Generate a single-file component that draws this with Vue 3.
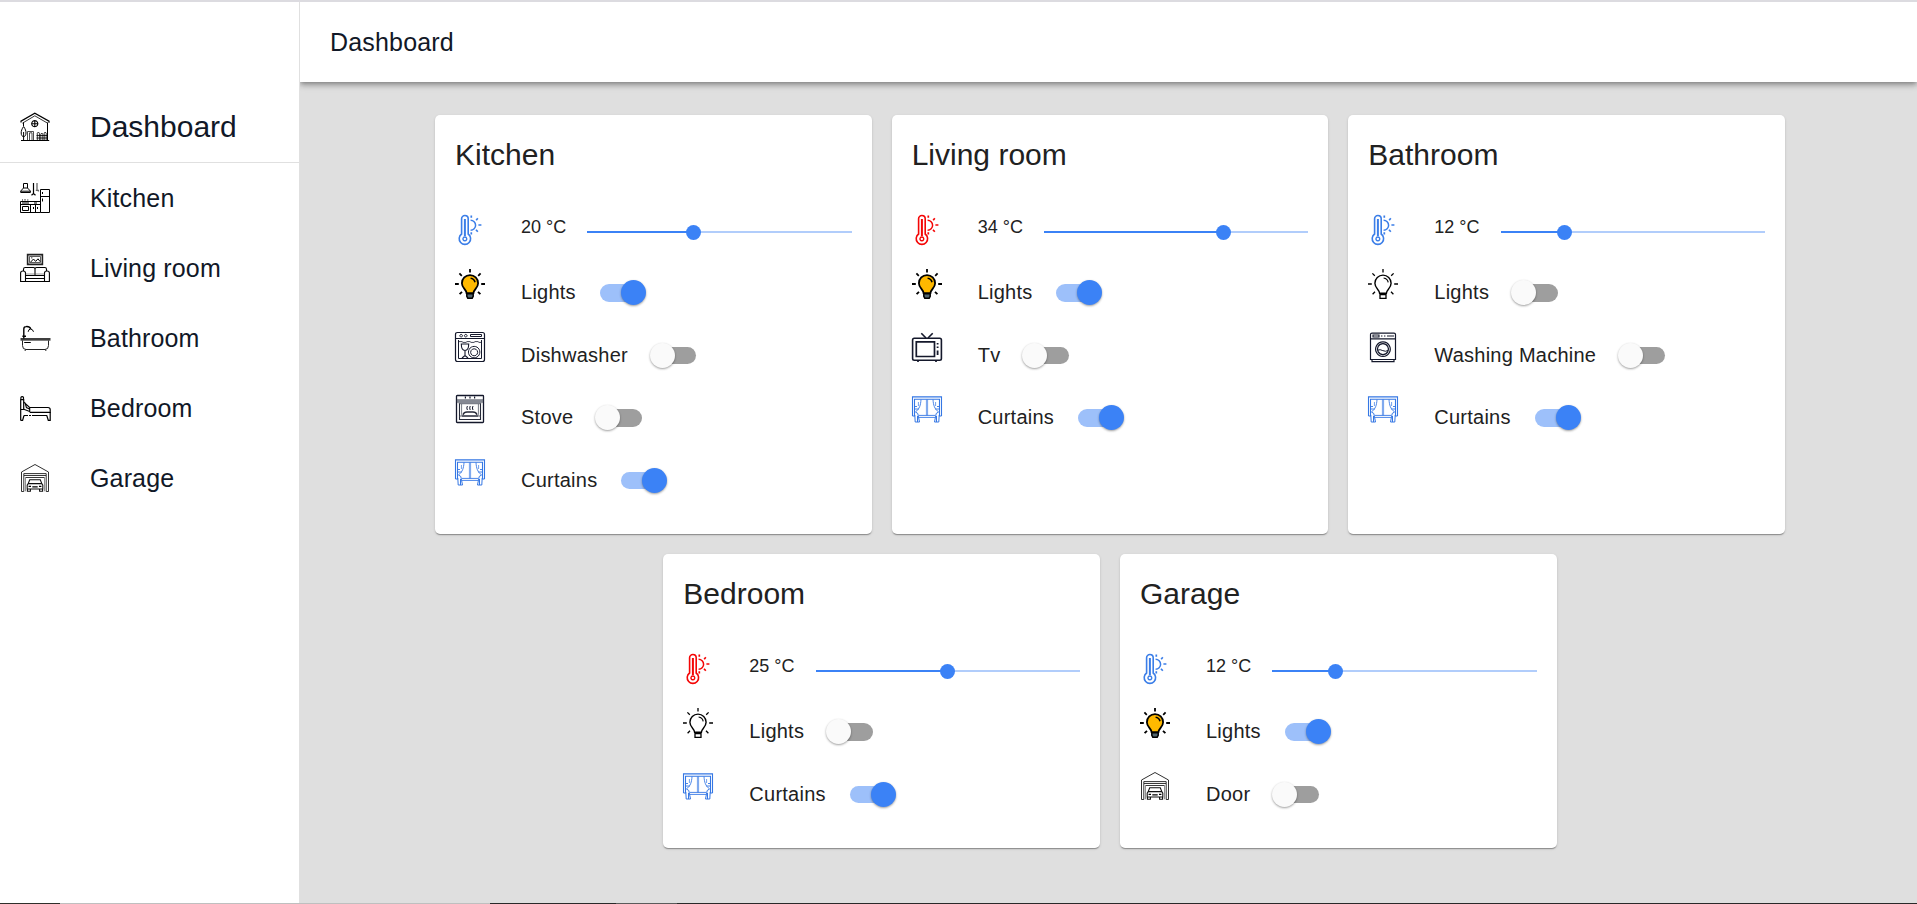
<script setup>
import { h } from 'vue'

const nav = [
  { icon: 'house', label: 'Dashboard', main: true },
  { icon: 'kitchen', label: 'Kitchen' },
  { icon: 'sofa', label: 'Living room' },
  { icon: 'bath', label: 'Bathroom' },
  { icon: 'bed', label: 'Bedroom' },
  { icon: 'garage', label: 'Garage' },
]

const rooms = [
  {
    name: 'Kitchen', temp: 20, hot: false,
    devices: [
      { icon: 'bulbOn', label: 'Lights', on: true },
      { icon: 'dishwasher', label: 'Dishwasher', on: false },
      { icon: 'stove', label: 'Stove', on: false },
      { icon: 'curtains', label: 'Curtains', on: true },
    ],
  },
  {
    name: 'Living room', temp: 34, hot: true,
    devices: [
      { icon: 'bulbOn', label: 'Lights', on: true },
      { icon: 'tv', label: 'Tv', on: false },
      { icon: 'curtains', label: 'Curtains', on: true },
    ],
  },
  {
    name: 'Bathroom', temp: 12, hot: false,
    devices: [
      { icon: 'bulb', label: 'Lights', on: false },
      { icon: 'washer', label: 'Washing Machine', on: false },
      { icon: 'curtains', label: 'Curtains', on: true },
    ],
  },
  {
    name: 'Bedroom', temp: 25, hot: true,
    devices: [
      { icon: 'bulb', label: 'Lights', on: false },
      { icon: 'curtains', label: 'Curtains', on: true },
    ],
  },
  {
    name: 'Garage', temp: 12, hot: false,
    devices: [
      { icon: 'bulbOn', label: 'Lights', on: true },
      { icon: 'garage', label: 'Door', on: false },
    ],
  },
]

// Each icon is a list of [path, stroke width, stroke, fill] on a 30x30 grid.
const K = '#000'
const N = '#14182b'
const B = '#3577e4'
const rays = 'M15 0V3.4M0 15H3.8M26.2 15H30M4.4 4.4L6.8 6.8M25.6 4.4L23.2 6.8M4.6 25.2L7 22.8M25.4 25.2L23 22.8'
const glass = 'M11.6 24.2C11.6 20.6 6.9 19.4 6.9 14.2A8.1 8.1 0 0 1 23.1 14.2C23.1 19.4 18.4 20.6 18.4 24.2Z'
const thermo = [
  ['M6.6 19V3.8A3.3 3.3 0 0 1 13.2 3.8V19A5.7 5.7 0 1 1 6.6 19Z', 1.6],
  ['M9.9 4V21', 2],
  ['M9.9 22A1.9 1.9 0 1 1 9.8 22Z', 1.4],
  ['M15.6 5.2A5 5 0 0 1 15.6 15.2', 1.5],
  ['M16.3 0.5V2.8M21.2 5.2L22.8 3.3M23.4 10H26.4M21 14.8L22.8 16.8M16.3 17.3V19.6', 1.7],
]
const icons = {
  cold: thermo.map(([d, w]) => [d, w, '#3b7ee8']),
  warm: thermo.map(([d, w]) => [d, w, '#f40606']),
  bulb: [
    [rays, 1.3, K],
    [glass, 1.4, K],
    ['M15.6 9A5.4 5.4 0 0 1 20.2 13.4', 1.2, K],
    ['M11.6 25.6H18.4M12 25V29.3H18V25', 1.3, K],
  ],
  bulbOn: [
    [rays, 1.8, K],
    [glass, 1.8, K, '#ffb900'],
    ['M15.6 9.2A5.2 5.2 0 0 1 20 13.2', 1.6, K],
    ['M11.8 24.8H18.2V27.4L17.2 29.2H12.8L11.8 27.4Z', 1.5, K, '#53666e'],
  ],
  house: [
    ['M1 10.6V9.2L14.8 1.2L29 9.2V10.8', 1.2, K],
    ['M2.4 11.2L14.8 3.8L27.6 11.2', 0.8, K],
    ['M3.5 10.5V14M27.5 10.5V28.5M1 28.5H29.2', 1, K],
    ['M14.8 8.6A3.1 3.1 0 1 1 14.7 8.6ZM14.8 8.6V14.8M11.7 11.7H17.9', 1.1, K],
    ['M3.6 14.5C1.8 17 1.2 19 1.2 21C1.2 25.8 6 25.8 6 21C6 19 5.4 17 3.6 14.5ZM3.6 20V28.5', 1, K],
    ['M7.5 28V19.5H13.5V28M9.5 28V20.8H12V28', 0.8, '#222'],
    ['M17.3 28V21.2L18.4 20L19.4 21.2V28M20.8 28V22.2L21.8 21L22.8 22.2V28M24.2 28V21.2L25.2 20L26.2 21.2V28M16.5 23.5H27M16.5 26H27', 0.8, K],
  ],
  kitchen: [
    ['M3.5 5V0.5H7.5V5M3.5 5L0.7 8V9.5H10.4V8L7.5 5ZM1 8.2H10', 1, K],
    ['M13.5 0V10.5M11.5 12.2L13.5 10.5L15.5 12.2', 1.2, K],
    ['M17 0V6.8M15.8 7.3H18.4V8.6', 1.3, '#666'],
    ['M20.5 29.5V6.5H29.5V29.5ZM20.5 13.5H29.5M22.5 9V11M22.5 15.5V18.5', 1, K],
    ['M0.5 29.5V18.5H20.5M0.5 29.5H20.5M0.5 21.5H20.5M10.5 21.5V29.5M15.5 21.5V29.5M13.5 24V26M17.5 24V26', 1, K],
    ['M2.5 23.5H8.5V27.5H2.5Z', 1, K],
    ['M2.5 17.5V16.5M5 17.5V16.2M7.8 17.5V16.5M2 20H9M14 20H17', 1, K],
  ],
  sofa: [
    ['M7.6 1.6H22.4V11.4H7.6Z', 1.6, '#222'],
    ['M9.5 3.5H20.5V9.5H9.5Z', 0.8, '#333'],
    ['M10.5 9.2L13.5 6L15.6 8.4L18 5.8L20 8.5M11.8 4.3V5.4', 1, K],
    ['M3.5 18V16.2Q3.5 14.5 5.2 14.5H13.5Q15 14.5 15 16.2V22M15 16.2Q15 14.5 16.6 14.5H24.8Q26.5 14.5 26.5 16.2V18', 1.1, K],
    ['M5.5 28V20Q5.5 18 3 18Q0.6 18 0.6 20V28.5H29.4V20Q29.4 18 27 18Q24.5 18 24.5 20V28M5.5 22.5H24.5M5.5 25.5H24.5', 1.1, K],
    ['M5.5 21H24.5', 0.6, '#555'],
  ],
  bath: [
    ['M0.5 15.8H30.5M0.5 17H30.5', 1.1, K],
    ['M2.5 17.5V22.5Q2.5 26.5 6 26.5H25Q28.5 26.5 28.5 22.5V17.5M5.5 26.6L5 28M25.5 26.6L26 28', 1, '#222'],
    ['M3.8 15.5V6Q3.8 3.6 6 3.6Q9.6 3.2 10.8 6M2.4 13.3H6', 1.4, K],
    ['M8.2 8.8Q8.4 6.2 10.6 6Q12.8 6.2 13.5 8.8M4.2 19.5H10.8', 1, K],
  ],
  bed: [
    ['M0.7 27.5V6.6H3.7V16M1 6Q0.4 3.7 2.2 3.7Q4 3.7 3.4 6', 1.2, K],
    ['M3.8 9.2L9.7 14.6V18.5L3.8 16.2M5 9.6L6.4 14.5L9.4 16', 1.1, K],
    ['M9.7 14.5H28Q30.2 14.5 30.2 16.6V19.3H9.7M0.7 16.5H4', 1.2, K],
    ['M10 19.5H30.2V27.4H28.3L26.8 22.5M4 22.5H8M9 22.5H11M12 22.5H27M0.7 27.4H2.6L4 22.5', 1.2, K],
  ],
  garage: [
    ['M3.8 28.5H1.5V9L15 1.5L28.5 9V28.5H26.2V10.6H3.8Z', 0.9, '#1a1a1a'],
    ['M4 12.5H26M5.4 14.5H24.6', 0.9, '#222'],
    ['M5.5 15V28.3M24.5 15V28.3', 0.6, '#444'],
    ['M8.2 20.6L9.7 16.8H20.3L21.8 20.6M7.2 26V22.2L8.2 20.6H21.8L22.8 22.2V26ZM7.4 26V28.3H10.4V26M19.6 26V28.3H22.6V26', 1.1, '#111'],
    ['M8.6 23.3H11M19 23.3H21.4M12.3 23.8H17.7', 1.3, K],
  ],
  dishwasher: [
    ['M2.5 0.5H27.5Q29.5 0.5 29.5 2.5V27.5Q29.5 29.5 27.5 29.5H2.5Q0.5 29.5 0.5 27.5V2.5Q0.5 0.5 2.5 0.5ZM0.5 6.5H29.5', 1.2, N],
    ['M6.2 2.4A1.3 1.3 0 1 1 6.1 2.4ZM10.8 2.4A1.3 1.3 0 1 1 10.7 2.4ZM15.5 2.5H26.5V4.5H15.5Z', 1, N],
    ['M3.5 8V26.5H26.5V8', 1, N],
    ['M3.5 9.6H7L8 10.4H11L12 9.6H15L16 10.4H19L20 9.6H23L24 10.4H26.5', 0.8, N],
    ['M6.3 12H13.7C13.7 15.5 13 18.5 10 18.5C7 18.5 6.3 15.5 6.3 12ZM10 18.5V24.5M7 26L10 23.5L13 26', 1.1, N],
    ['M19.2 14.4A5.7 5.7 0 1 1 19.1 14.4ZM19.2 16.8A3.5 3.5 0 1 1 19.1 16.8Z', 1, N],
  ],
  stove: [
    ['M2.3 1.5H27.7Q28.5 1.5 28.5 2.3V27.7Q28.5 28.5 27.7 28.5H2.3Q1.5 28.5 1.5 27.7V2.3Q1.5 1.5 2.3 1.5Z', 1.3, N],
    ['M2 5.5H28V8.6H25.8V10H4.2V8.6H2Z', 0.4, '#555b66', '#858993'],
    ['M9.8 3.5H11M14.4 3.5H15.6M19 3.5H20.2', 1.9, N],
    ['M4.5 9.5V25.5H25.5V9.5', 1.1, '#262a38'],
    ['M6.6 10V20.5L4.8 23M23.4 10V20.5L25.2 23', 0.8, '#565b66'],
    ['M12.4 12Q11.2 14 12.4 16M15.2 12Q14.2 14 15.2 16M18 12Q16.8 14 18 16', 1, N],
    ['M8 20.8Q9 18 12 18H18Q21 18 22 20.8M6.5 22H23.5', 1.4, '#262a38'],
  ],
  curtains: [
    ['M0.5 22V2.9H29.5V22M0.5 22H2.5V5.2H27.5V22H29.5', 1.1, B],
    ['M9 5.5C8.7 11 7.5 15 3.4 18M21 5.5C21.3 11 22.5 15 26.6 18M2.6 15H6.8M27.4 15H23.2M2.6 12.5H5M27.4 12.5H25', 0.9, B],
    ['M14.4 5.4V21.5M15.6 5.4V21.5M6.4 8V12M23.6 8V12', 0.7, B],
    ['M7 21.4H23M7 23.4H23', 0.9, B],
    ['M3.5 18L5.8 19.5L7.5 28H3.2L2.8 21M5.5 22V28M26.5 18L24.2 19.5L22.5 28H26.8L27.2 21M24.5 22V28', 1, B],
  ],
  tv: [
    ['M2.3 6.2H27.7Q29.4 6.2 29.4 7.9V26.5Q29.4 28.2 27.7 28.2H2.3Q0.6 28.2 0.6 26.5V7.9Q0.6 6.2 2.3 6.2Z', 1.6, N],
    ['M4.3 9.8H22.5V24.5H4.3Z', 1.7, N],
    ['M9.3 1.2L14 6M20.7 1.2L16 6', 1.6, N],
    ['M25.6 11V12.6M25.6 14.4V16M25.6 18.5V23', 1.8, N],
    ['M6 28V30M24 28V30', 1.7, N],
  ],
  washer: [
    ['M4 1.2H26Q27.5 1.2 27.5 2.6V27.5H2.5V2.6Q2.5 1.2 4 1.2ZM2.5 6.8H27.5', 1.2, N],
    ['M5 3H11V5H5ZM13 4H14.4M16 4H17.4M19 4H26', 1.1, N],
    ['M4 28V29.7H26V28', 1.2, N],
    ['M15 9.8A7.3 7.3 0 1 1 14.9 9.8ZM15 11.6A5.5 5.5 0 1 1 14.9 11.6Z', 1.2, N],
    ['M9.6 18.2Q12 17 14.8 18.6Q17.5 20 20.4 18.4', 1, N],
  ],
}

const Icon = (props) =>
  h('svg', { viewBox: '0 0 30 30', width: 30, height: 30, overflow: 'visible' },
    icons[props.name].map(([d, w, s, f]) =>
      h('path', { d, stroke: s, 'stroke-width': w, fill: f || 'none' })))
Icon.props = ['name']
</script>

<template>
  <div class="page">
    <div class="edge-top"></div>
    <div class="shell">
      <nav class="sidebar">
        <a v-for="n in nav" :key="n.label" class="nav-item" :class="{ main: n.main }">
          <Icon :name="n.icon" class="icon" />
          <span>{{ n.label }}</span>
        </a>
      </nav>
      <div class="content">
        <header class="topbar">Dashboard</header>
        <main class="rooms">
          <section v-for="r in rooms" :key="r.name" class="card">
            <h2>{{ r.name }}</h2>
            <div class="temp-row">
              <Icon :name="r.hot ? 'warm' : 'cold'" class="icon" />
              <span class="temp">{{ r.temp }} °C</span>
              <div class="slider">
                <div class="fill" :style="{ width: r.temp * 2 + '%' }"></div>
                <div class="thumb" :style="{ left: r.temp * 2 + '%' }"></div>
              </div>
            </div>
            <div v-for="d in r.devices" :key="d.label" class="row">
              <Icon :name="d.icon" class="icon" />
              <label class="control">
                <span>{{ d.label }}</span>
                <span class="switch" :class="{ on: d.on }"><i></i></span>
              </label>
            </div>
          </section>
        </main>
      </div>
    </div>
    <div class="edge-bottom"><i class="a"></i><i class="b"></i><i class="c"></i><i class="d"></i><i class="e"></i></div>
  </div>
</template>

<style>
body { overflow: hidden; }
</style>

<style scoped>
* { box-sizing: border-box; }
.page {
  display: flex;
  flex-direction: column;
  height: 904px;
  font-family: "Liberation Sans", Arial, sans-serif;
  color: #212121;
}
.edge-top { height: 2px; background: #dcdbe0; }
.edge-bottom { display: flex; height: 1px; }
.edge-bottom .a { width: 60px; background: #2f2f2b; }
.edge-bottom .b { width: 430px; background: #bfbfbf; }
.edge-bottom .c { width: 126px; background: #292929; }
.edge-bottom .d { width: 61px; background: #5a5a5a; }
.edge-bottom .e { flex: 1; background: #292929; }
.shell { display: flex; flex: 1; min-height: 0; }
.sidebar {
  width: 300px;
  padding-top: 90px;
  background: #fff;
  border-right: 1px solid #e0e0e0;
}
.nav-item {
  display: flex;
  align-items: center;
  gap: 40px;
  height: 70px;
  padding-left: 20px;
  font-size: 25px;
  letter-spacing: 0.15px;
  color: #111827;
}
.nav-item.main {
  height: 71px;
  font-size: 30px;
  letter-spacing: 0;
  border-bottom: 1px solid #e0e0e0;
}
.icon { display: block; flex: none; }
.content {
  display: flex;
  flex-direction: column;
  flex: 1;
  background: #dfdfdf;
  overflow: hidden;
}
.topbar {
  flex: none;
  height: 80px;
  padding-left: 30px;
  line-height: 80px;
  font-size: 25px;
  letter-spacing: 0.18px;
  color: #111827;
  background: #fff;
  box-shadow: 0 2px 4px -1px rgba(0, 0, 0, 0.25), 0 4px 5px rgba(0, 0, 0, 0.16), 0 1px 10px rgba(0, 0, 0, 0.14);
}
.rooms {
  display: flex;
  flex-wrap: wrap;
  justify-content: center;
  align-content: flex-start;
  gap: 20px;
  padding: 33px 132px 0 135px;
}
.card {
  width: calc((100% - 40px) / 3);
  padding: 20px 20px 15px;
  background: #fff;
  border-radius: 5px;
  box-shadow: 0 2px 1px -1px rgba(0, 0, 0, 0.2), 0 1px 1px rgba(0, 0, 0, 0.14), 0 1px 3px rgba(0, 0, 0, 0.12);
}
h2 {
  height: 80px;
  margin: 0;
  font-size: 30px;
  font-weight: 400;
  line-height: 40px;
}
.temp-row { display: flex; height: 54px; }
.temp {
  width: 66.4px;
  margin-left: 36px;
  line-height: 24px;
  font-size: 18px;
}
.slider {
  position: relative;
  flex: 1;
  height: 2.5px;
  margin-top: 15.75px;
  background: #b1cdfb;
}
.fill { height: 100%; background: #3b82f6; }
.thumb {
  position: absolute;
  top: 50%;
  width: 15px;
  height: 15px;
  margin: -7px 0 0 -7.5px;
  border-radius: 50%;
  background: #3b82f6;
}
.row { display: flex; gap: 36px; height: 62.5px; }
.control {
  display: flex;
  align-items: center;
  gap: 24px;
  height: 47.5px;
  font-size: 20px;
  letter-spacing: 0.24px;
}
.switch {
  position: relative;
  width: 44.5px;
  height: 17.5px;
  border-radius: 9px;
  background: #9e9e9e;
}
.switch i {
  position: absolute;
  top: -3.75px;
  left: -2px;
  width: 25px;
  height: 25px;
  border-radius: 50%;
  background: #fafafa;
  box-shadow: 0 1px 2px rgba(0, 0, 0, 0.28), 0 1px 3px rgba(0, 0, 0, 0.12);
}
.switch.on { background: #9dc0fa; }
.switch.on i { left: 21px; background: #3b82f6; }
</style>
